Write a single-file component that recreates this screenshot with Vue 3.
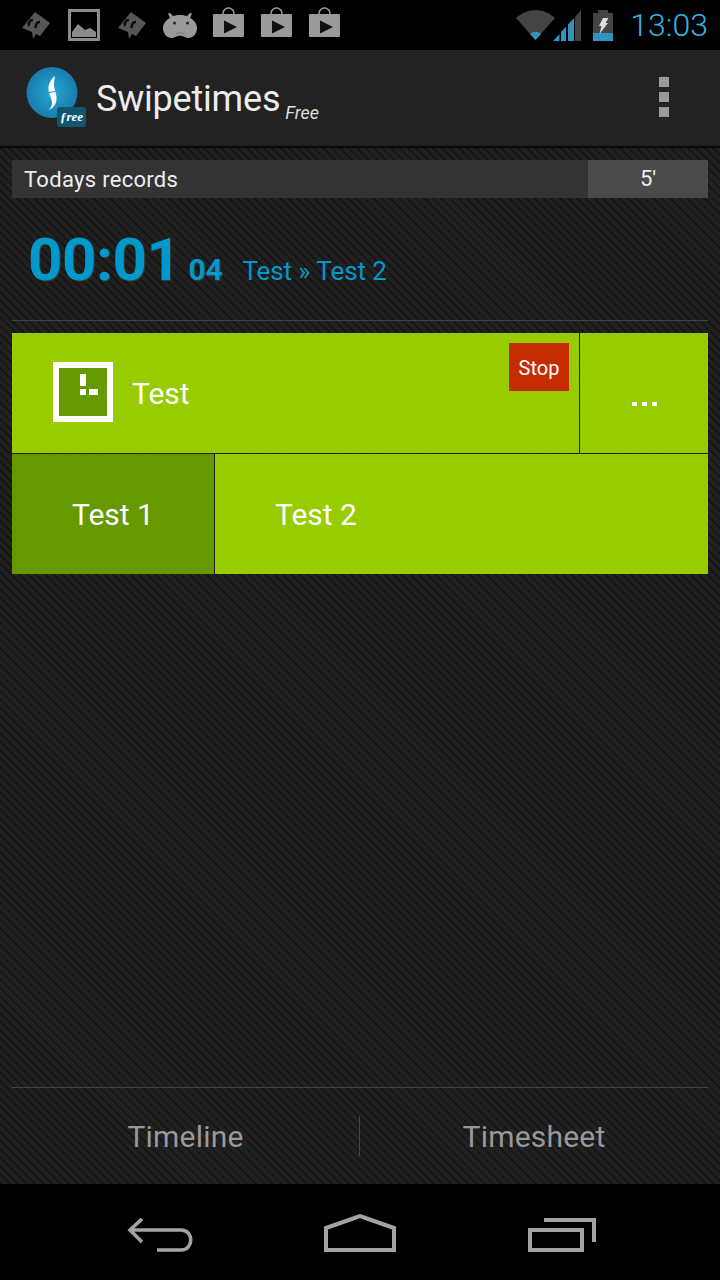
<script setup>
const notifications = ['quote', 'picture', 'quote', 'android', 'play', 'play', 'play'];
</script>

<template>
  <div class="phone">
    <header class="status-bar">
      <div class="notifications">
        <div v-for="(item, index) in notifications" :key="index" class="note-slot">
          <svg v-if="item === 'quote'" class="note-quote" viewBox="0 0 28 29" aria-hidden="true">
            <path d="M13 1l15 11-10 13-4-2-3 5-1-7-10-4z" fill="#565656" />
            <path d="M7 15c-1-3 1-6 4-6M14 17c-1-3 1-6 4-6" fill="none" stroke="#0c0c0c" stroke-width="2.4" />
          </svg>
          <svg v-else-if="item === 'picture'" class="note-pic" viewBox="0 0 32 32" aria-hidden="true">
            <path d="M1.5 1.5h29v29h-29z" fill="none" stroke="#8c8c8c" stroke-width="3" />
            <path d="M4 28v-5l6-8 7 6 5-2 6 4v5z" fill="#8c8c8c" />
          </svg>
          <svg v-else-if="item === 'android'" class="note-droid" viewBox="0 0 34 25" aria-hidden="true">
            <path d="M7 5L5 .5 7 0l3 3c4-1.5 10-1.5 14 0l3-3 2 .5L27 5c4 2 7 6 7 10 0 6-4 10-9 10-3 0-5-2.500-8-2.500S12 25 9 25c-5 0-9-4-9-10 0-4 3-8 7-10z" fill="#9a9a9a" />
            <circle cx="11.500" cy="10" r="1.500" fill="#222" />
            <circle cx="24.500" cy="10" r="1.500" fill="#222" />
            <path d="M13 21c3-1.500 6-1.500 9 0" fill="none" stroke="#777" stroke-width="1" />
          </svg>
          <svg v-else class="note-play" viewBox="0 0 31 30" aria-hidden="true">
            <path d="M10 8V6.500a5.500 5.500 0 0 1 11 0V8" fill="none" stroke="#9a9a9a" stroke-width="1.500" />
            <path d="M1 7h29a1 1 0 0 1 1 1v21a1 1 0 0 1-1 1H1a1 1 0 0 1-1-1V8a1 1 0 0 1 1-1z" fill="#9a9a9a" />
            <path d="M11 13.500l13 6.500-13 6.500z" fill="#111" />
          </svg>
        </div>
      </div>
      <div class="system-icons">
        <svg class="wifi" viewBox="0 0 39 30" aria-hidden="true">
          <path d="M0 8C11-2.500 28-2.500 39 8L19.500 30z" fill="#444" />
          <path d="M14 24c3-3 8-3 11 0l-5.500 6z" fill="#2f94bf" />
        </svg>
        <svg class="signal" viewBox="0 0 28 31" aria-hidden="true">
          <path d="M22 31V7l6-7v31z" fill="#444" />
          <path d="M0 31l6.500-7v7zM8 31V22l5-5.500V31zM15 31V14.500l6-6.500v23z" fill="#2f94bf" />
        </svg>
        <svg class="battery" viewBox="0 0 20 31" aria-hidden="true">
          <path d="M5 0h10v3h5v28H0V3h5z" fill="#444" />
          <path d="M0 23h20v8H0z" fill="#2f94bf" />
          <path d="M10 8h5.500l-3 5H15L6.500 24l2-8H6z" fill="#ddd" />
        </svg>
        <span class="clock">13:03</span>
      </div>
    </header>

    <div class="action-bar">
      <div class="logo">
        <svg viewBox="0 0 62 62" aria-hidden="true">
          <defs>
            <radialGradient id="logoBlue" cx="50%" cy="50%" r="55%">
              <stop offset="0%" stop-color="#29a6d6" />
              <stop offset="100%" stop-color="#1479a8" />
            </radialGradient>
          </defs>
          <circle cx="26" cy="25.500" r="25.500" fill="url(#logoBlue)" />
          <path d="M29 9c-4 3-7 8-6.500 14 .3 4 3 8 3.500 12 .3 3-1 6-3.500 8 5.500-2 8.500-7 8-13-.3-4-2-7-2.500-11-.3-3 .500-7 1-10z" fill="#fff" />
          <path d="M22.500 25.500l7-1" stroke="#1b8cba" stroke-width="1" />
        </svg>
        <span class="logo-badge">ƒree</span>
      </div>
      <span class="app-title">Swipetimes</span>
      <span class="app-sub">Free</span>
      <div class="overflow">
        <i></i><i></i><i></i>
      </div>
    </div>

    <main class="content">
      <div class="records">
        <span class="records-label">Todays records</span>
        <span class="records-value">5'</span>
      </div>

      <div class="timer">
        <span class="timer-main">00:01</span>
        <span class="timer-sec">04</span>
        <span class="timer-task">Test » Test 2</span>
      </div>

      <div class="tiles">
        <div class="tile-row">
          <div class="tile tile-parent">
            <span class="task-icon"><i class="hand-v"></i><i class="hand-dot"></i><i class="hand-h"></i></span>
            <span class="tile-name">Test</span>
            <button class="stop" type="button">Stop</button>
          </div>
          <div class="tile tile-more">
            <i></i><i></i><i></i>
          </div>
        </div>
        <div class="tile-row">
          <div class="tile tile-active">Test 1</div>
          <div class="tile tile-child">Test 2</div>
        </div>
      </div>

      <div class="tabs">
        <span class="tab">Timeline</span>
        <span class="tab">Timesheet</span>
      </div>
    </main>

    <nav class="nav-bar">
      <svg class="nav-back" viewBox="0 0 66 34" aria-hidden="true">
        <path d="M15 1L3 12l12 12M3 12h51c13 0 13 20 0 20H30" fill="none" stroke="#a3a3a3" stroke-width="3.600" />
      </svg>
      <svg class="nav-home" viewBox="0 0 72 38" aria-hidden="true">
        <path d="M2 36V14L36 2l34 12v22z" fill="none" stroke="#a3a3a3" stroke-width="4" />
      </svg>
      <svg class="nav-recent" viewBox="0 0 68 34" aria-hidden="true">
        <path d="M2 12h52v20H2zM16 2h50v22" fill="none" stroke="#a3a3a3" stroke-width="4" />
      </svg>
    </nav>
  </div>
</template>

<style>
html, body {
  margin: 0;
  background: #000;
}
</style>

<style scoped>
.phone {
  width: 720px;
  height: 1280px;
  display: flex;
  flex-direction: column;
  overflow: hidden;
  font-family: Roboto, "Liberation Sans", sans-serif;
  background: #000;
}

.status-bar {
  height: 50px;
  flex: none;
  display: flex;
  align-items: center;
  justify-content: space-between;
  padding: 0 12px;
  background: #000;
}

.notifications {
  display: flex;
  align-items: center;
}

.note-slot {
  width: 48px;
  display: flex;
  justify-content: center;
}

.notifications svg {
  display: block;
}

.note-quote {
  width: 28px;
  height: 29px;
  margin-top: 1px;
}

.note-pic {
  width: 32px;
  height: 32px;
}

.note-droid {
  width: 34px;
  height: 25px;
}

.note-play {
  width: 31px;
  height: 30px;
  margin-bottom: 6px;
}

.system-icons {
  display: flex;
  align-items: center;
}

.wifi {
  width: 39px;
  height: 30px;
}

.signal {
  width: 28px;
  height: 31px;
  margin-left: -2px;
}

.battery {
  width: 20px;
  height: 31px;
  margin-left: 12px;
}

.clock {
  margin-left: 17px;
  font-size: 32px;
  font-weight: 300;
  color: #33b5e5;
  line-height: 50px;
}

.action-bar {
  height: 96px;
  flex: none;
  display: flex;
  align-items: center;
  padding: 0 0 0 26px;
  background: #222;
  border-bottom: 2px solid #0a0a0a;
}

.logo {
  position: relative;
  width: 62px;
  height: 62px;
}

.logo svg {
  display: block;
  width: 62px;
  height: 62px;
}

.logo-badge {
  position: absolute;
  left: 31px;
  top: 40px;
  width: 29px;
  height: 20px;
  border-radius: 3px;
  background: #11556f;
  color: #fff;
  font-family: "Liberation Serif", serif;
  font-size: 13px;
  font-style: italic;
  font-weight: 700;
  line-height: 20px;
  text-align: center;
}

.app-title {
  margin: 2px 0 0 8px;
  font-size: 36px;
  letter-spacing: -0.2px;
  color: #ececec;
}

.app-sub {
  margin-left: 5px;
  margin-top: 28px;
  font-size: 18px;
  font-style: italic;
  color: #ddd;
}

.overflow {
  margin: 0 51px 2px auto;
  display: flex;
  flex-direction: column;
  gap: 5px;
}

.overflow i {
  display: block;
  width: 10px;
  height: 10px;
  background: #999;
}

.content {
  flex: 1;
  display: flex;
  flex-direction: column;
  padding: 12px 12px 0;
  background-color: #1c1c1c;
  background-image: repeating-linear-gradient(45deg, #161616 0 2px, #212121 2px 6px);
}

.records {
  height: 38px;
  flex: none;
  display: flex;
  align-items: center;
  background: #333;
}

.records-label {
  flex: 1;
  padding-left: 12px;
  font-size: 22px;
  letter-spacing: 0.3px;
  color: #eee;
}

.records-value {
  width: 120px;
  height: 100%;
  background: #4a4a4a;
  color: #eee;
  font-size: 22px;
  line-height: 38px;
  text-align: center;
}

.timer {
  height: 123px;
  flex: none;
  display: flex;
  align-items: baseline;
  padding: 26px 0 0 16px;
  box-sizing: border-box;
  border-bottom: 1px solid #444;
  color: #0099cc;
}

.timer-main {
  font-size: 60px;
  font-weight: 700;
  letter-spacing: -0.4px;
  text-shadow: 1px 1px 1px #3a3a3a;
}

.timer-sec {
  margin-left: 8px;
  font-size: 30px;
  font-weight: 700;
  letter-spacing: -0.3px;
  text-shadow: 1px 1px 1px #3a3a3a;
}

.timer-task {
  margin-left: 20px;
  font-size: 26px;
  letter-spacing: -0.1px;
}

.tiles {
  margin-top: 12px;
  display: flex;
  flex-direction: column;
  gap: 1px;
}

.tile-row {
  display: flex;
  height: 120px;
  gap: 1px;
}

.tile {
  background: #99cc00;
  color: #fff;
  font-size: 30px;
  display: flex;
  align-items: center;
}

.tile-parent {
  position: relative;
  width: 567px;
  padding-left: 41px;
  box-sizing: border-box;
}

.task-icon {
  position: relative;
  width: 60px;
  height: 60px;
  margin-bottom: 2px;
  box-sizing: border-box;
  border: 6px solid #fff;
  background: #669900;
}

.task-icon i {
  position: absolute;
  background: #fff;
}

.hand-v {
  left: 21px;
  top: 6px;
  width: 6px;
  height: 12px;
}

.hand-dot {
  left: 21px;
  top: 21px;
  width: 6px;
  height: 6px;
}

.hand-h {
  left: 30px;
  top: 21px;
  width: 9px;
  height: 6px;
}

.tile-name {
  margin-left: 19px;
}

.stop {
  position: absolute;
  right: 10px;
  top: 10px;
  width: 60px;
  height: 48px;
  border: none;
  padding: 2px 0 0;
  background: #c42c00;
  color: #fff;
  font-family: inherit;
  font-size: 20px;
}

.tile-more {
  flex: 1;
  justify-content: center;
  gap: 5px;
  padding-top: 21px;
  box-sizing: border-box;
}

.tile-more i {
  width: 5px;
  height: 4px;
  background: #fff;
}

.tile-active {
  width: 202px;
  justify-content: center;
  background: #669900;
}

.tile-child {
  flex: 1;
  padding-left: 60px;
}

.tabs {
  margin-top: auto;
  height: 97px;
  flex: none;
  display: grid;
  grid-template-columns: 1fr 1fr;
  align-items: center;
  border-top: 1px solid #444;
  box-sizing: border-box;
}

.tab {
  height: 40px;
  line-height: 42px;
  text-align: center;
  font-size: 30px;
  letter-spacing: 0.2px;
  color: #999;
}

.tab:first-child {
  border-right: 1px solid #444;
}

.nav-bar {
  height: 96px;
  flex: none;
  box-sizing: border-box;
  display: flex;
  align-items: flex-end;
  padding: 0 124px 28px 127px;
  justify-content: space-between;
  background: #000;
}

.nav-bar svg {
  display: block;
}

.nav-back {
  width: 66px;
  height: 34px;
}

.nav-home {
  width: 72px;
  height: 38px;
  margin-right: 1px;
}

.nav-recent {
  width: 68px;
  height: 34px;
}
</style>
